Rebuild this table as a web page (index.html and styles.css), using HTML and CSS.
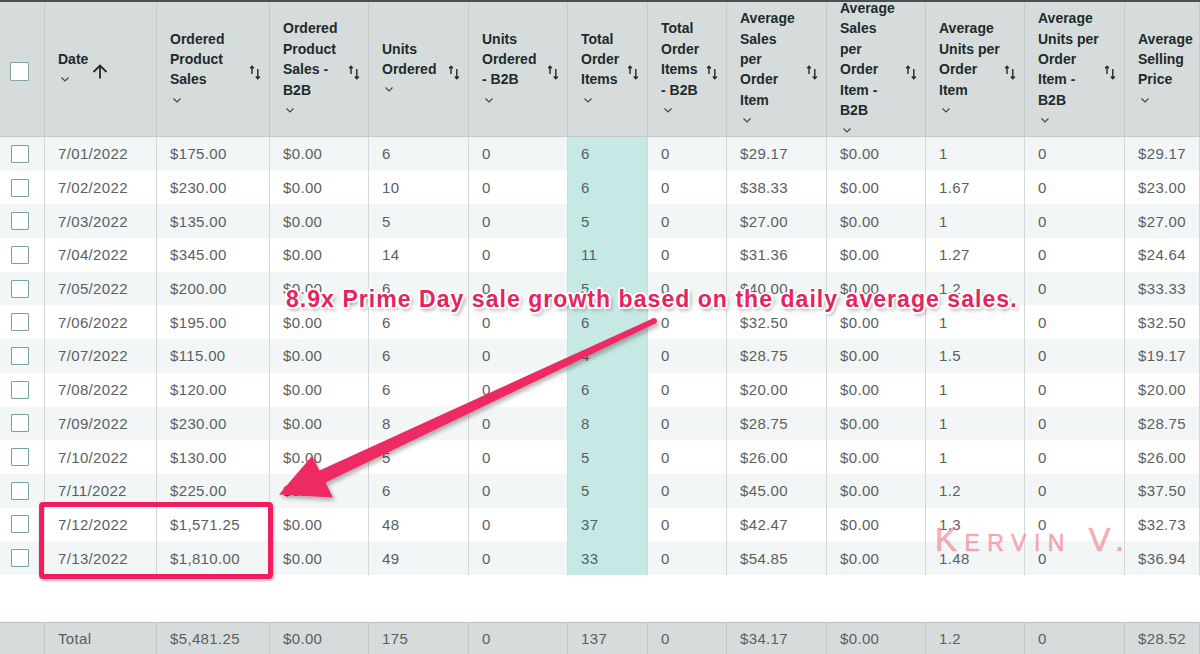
FILE: index.html
```html
<!DOCTYPE html>
<html>
<head>
<meta charset="utf-8">
<link rel="stylesheet" href="styles.css">
</head>
<body>
<div class="page">
  <div class="row head">
    <div class="hcell hcheck"><span class="cb"></span></div>
    <div class="hcell hdate">
      <div class="htext">Date<span class="chevline"><svg class="chev" width="8" height="5" viewBox="0 0 8 5"><polyline points="0.5,0.5 4,4 7.5,0.5" fill="none" stroke="#3a4747" stroke-width="1.1"/></svg></span></div>
      <svg class="uparrow" width="16" height="15" viewBox="0 0 16 15"><path d="M8 14.5V1.5M1.5 8L8 1.5L14.5 8" fill="none" stroke="#1d2b2b" stroke-width="1.8"/></svg>
    </div>
    <div class="hcell"><div class="htext">Ordered<br>Product<br>Sales<span class="chevline"><svg class="chev" width="8" height="5" viewBox="0 0 8 5"><polyline points="0.5,0.5 4,4 7.5,0.5" fill="none" stroke="#3a4747" stroke-width="1.1"/></svg></span></div><svg class="sort" width="12" height="15" viewBox="0 0 12 15"><path d="M3 9V1.5M1.2 3.3L3 1.3L4.8 3.3M8.8 4V13.5M6.8 11.5L8.8 13.7L10.8 11.5" fill="none" stroke="#1d2b2b" stroke-width="1.4"/></svg></div>
    <div class="hcell"><div class="htext">Ordered<br>Product<br>Sales -<br>B2B<span class="chevline"><svg class="chev" width="8" height="5" viewBox="0 0 8 5"><polyline points="0.5,0.5 4,4 7.5,0.5" fill="none" stroke="#3a4747" stroke-width="1.1"/></svg></span></div><svg class="sort" width="12" height="15" viewBox="0 0 12 15"><path d="M3 9V1.5M1.2 3.3L3 1.3L4.8 3.3M8.8 4V13.5M6.8 11.5L8.8 13.7L10.8 11.5" fill="none" stroke="#1d2b2b" stroke-width="1.4"/></svg></div>
    <div class="hcell"><div class="htext">Units<br>Ordered<span class="chevline"><svg class="chev" width="8" height="5" viewBox="0 0 8 5"><polyline points="0.5,0.5 4,4 7.5,0.5" fill="none" stroke="#3a4747" stroke-width="1.1"/></svg></span></div><svg class="sort" width="12" height="15" viewBox="0 0 12 15"><path d="M3 9V1.5M1.2 3.3L3 1.3L4.8 3.3M8.8 4V13.5M6.8 11.5L8.8 13.7L10.8 11.5" fill="none" stroke="#1d2b2b" stroke-width="1.4"/></svg></div>
    <div class="hcell"><div class="htext">Units<br>Ordered<br>- B2B<span class="chevline"><svg class="chev" width="8" height="5" viewBox="0 0 8 5"><polyline points="0.5,0.5 4,4 7.5,0.5" fill="none" stroke="#3a4747" stroke-width="1.1"/></svg></span></div><svg class="sort" width="12" height="15" viewBox="0 0 12 15"><path d="M3 9V1.5M1.2 3.3L3 1.3L4.8 3.3M8.8 4V13.5M6.8 11.5L8.8 13.7L10.8 11.5" fill="none" stroke="#1d2b2b" stroke-width="1.4"/></svg></div>
    <div class="hcell"><div class="htext">Total<br>Order<br>Items<span class="chevline"><svg class="chev" width="8" height="5" viewBox="0 0 8 5"><polyline points="0.5,0.5 4,4 7.5,0.5" fill="none" stroke="#3a4747" stroke-width="1.1"/></svg></span></div><svg class="sort" width="12" height="15" viewBox="0 0 12 15"><path d="M3 9V1.5M1.2 3.3L3 1.3L4.8 3.3M8.8 4V13.5M6.8 11.5L8.8 13.7L10.8 11.5" fill="none" stroke="#1d2b2b" stroke-width="1.4"/></svg></div>
    <div class="hcell"><div class="htext">Total<br>Order<br>Items<br>- B2B<span class="chevline"><svg class="chev" width="8" height="5" viewBox="0 0 8 5"><polyline points="0.5,0.5 4,4 7.5,0.5" fill="none" stroke="#3a4747" stroke-width="1.1"/></svg></span></div><svg class="sort" width="12" height="15" viewBox="0 0 12 15"><path d="M3 9V1.5M1.2 3.3L3 1.3L4.8 3.3M8.8 4V13.5M6.8 11.5L8.8 13.7L10.8 11.5" fill="none" stroke="#1d2b2b" stroke-width="1.4"/></svg></div>
    <div class="hcell"><div class="htext">Average<br>Sales<br>per<br>Order<br>Item<span class="chevline"><svg class="chev" width="8" height="5" viewBox="0 0 8 5"><polyline points="0.5,0.5 4,4 7.5,0.5" fill="none" stroke="#3a4747" stroke-width="1.1"/></svg></span></div><svg class="sort" width="12" height="15" viewBox="0 0 12 15"><path d="M3 9V1.5M1.2 3.3L3 1.3L4.8 3.3M8.8 4V13.5M6.8 11.5L8.8 13.7L10.8 11.5" fill="none" stroke="#1d2b2b" stroke-width="1.4"/></svg></div>
    <div class="hcell"><div class="htext">Average<br>Sales<br>per<br>Order<br>Item -<br>B2B<span class="chevline"><svg class="chev" width="8" height="5" viewBox="0 0 8 5"><polyline points="0.5,0.5 4,4 7.5,0.5" fill="none" stroke="#3a4747" stroke-width="1.1"/></svg></span></div><svg class="sort" width="12" height="15" viewBox="0 0 12 15"><path d="M3 9V1.5M1.2 3.3L3 1.3L4.8 3.3M8.8 4V13.5M6.8 11.5L8.8 13.7L10.8 11.5" fill="none" stroke="#1d2b2b" stroke-width="1.4"/></svg></div>
    <div class="hcell"><div class="htext">Average<br>Units per<br>Order<br>Item<span class="chevline"><svg class="chev" width="8" height="5" viewBox="0 0 8 5"><polyline points="0.5,0.5 4,4 7.5,0.5" fill="none" stroke="#3a4747" stroke-width="1.1"/></svg></span></div><svg class="sort" width="12" height="15" viewBox="0 0 12 15"><path d="M3 9V1.5M1.2 3.3L3 1.3L4.8 3.3M8.8 4V13.5M6.8 11.5L8.8 13.7L10.8 11.5" fill="none" stroke="#1d2b2b" stroke-width="1.4"/></svg></div>
    <div class="hcell"><div class="htext">Average<br>Units per<br>Order<br>Item -<br>B2B<span class="chevline"><svg class="chev" width="8" height="5" viewBox="0 0 8 5"><polyline points="0.5,0.5 4,4 7.5,0.5" fill="none" stroke="#3a4747" stroke-width="1.1"/></svg></span></div><svg class="sort" width="12" height="15" viewBox="0 0 12 15"><path d="M3 9V1.5M1.2 3.3L3 1.3L4.8 3.3M8.8 4V13.5M6.8 11.5L8.8 13.7L10.8 11.5" fill="none" stroke="#1d2b2b" stroke-width="1.4"/></svg></div>
    <div class="hcell"><div class="htext">Average<br>Selling<br>Price<span class="chevline"><svg class="chev" width="8" height="5" viewBox="0 0 8 5"><polyline points="0.5,0.5 4,4 7.5,0.5" fill="none" stroke="#3a4747" stroke-width="1.1"/></svg></span></div></div>
  </div>

  <div class="body">
    <div class="row odd"><div class="cell"><span class="cb"></span></div><div class="cell">7/01/2022</div><div class="cell">$175.00</div><div class="cell">$0.00</div><div class="cell">6</div><div class="cell">0</div><div class="cell teal">6</div><div class="cell">0</div><div class="cell">$29.17</div><div class="cell">$0.00</div><div class="cell">1</div><div class="cell">0</div><div class="cell">$29.17</div></div>
    <div class="row"><div class="cell"><span class="cb"></span></div><div class="cell">7/02/2022</div><div class="cell">$230.00</div><div class="cell">$0.00</div><div class="cell">10</div><div class="cell">0</div><div class="cell teal">6</div><div class="cell">0</div><div class="cell">$38.33</div><div class="cell">$0.00</div><div class="cell">1.67</div><div class="cell">0</div><div class="cell">$23.00</div></div>
    <div class="row odd"><div class="cell"><span class="cb"></span></div><div class="cell">7/03/2022</div><div class="cell">$135.00</div><div class="cell">$0.00</div><div class="cell">5</div><div class="cell">0</div><div class="cell teal">5</div><div class="cell">0</div><div class="cell">$27.00</div><div class="cell">$0.00</div><div class="cell">1</div><div class="cell">0</div><div class="cell">$27.00</div></div>
    <div class="row"><div class="cell"><span class="cb"></span></div><div class="cell">7/04/2022</div><div class="cell">$345.00</div><div class="cell">$0.00</div><div class="cell">14</div><div class="cell">0</div><div class="cell teal">11</div><div class="cell">0</div><div class="cell">$31.36</div><div class="cell">$0.00</div><div class="cell">1.27</div><div class="cell">0</div><div class="cell">$24.64</div></div>
    <div class="row odd"><div class="cell"><span class="cb"></span></div><div class="cell">7/05/2022</div><div class="cell">$200.00</div><div class="cell">$0.00</div><div class="cell">6</div><div class="cell">0</div><div class="cell teal">5</div><div class="cell">0</div><div class="cell">$40.00</div><div class="cell">$0.00</div><div class="cell">1.2</div><div class="cell">0</div><div class="cell">$33.33</div></div>
    <div class="row"><div class="cell"><span class="cb"></span></div><div class="cell">7/06/2022</div><div class="cell">$195.00</div><div class="cell">$0.00</div><div class="cell">6</div><div class="cell">0</div><div class="cell teal">6</div><div class="cell">0</div><div class="cell">$32.50</div><div class="cell">$0.00</div><div class="cell">1</div><div class="cell">0</div><div class="cell">$32.50</div></div>
    <div class="row odd"><div class="cell"><span class="cb"></span></div><div class="cell">7/07/2022</div><div class="cell">$115.00</div><div class="cell">$0.00</div><div class="cell">6</div><div class="cell">0</div><div class="cell teal">4</div><div class="cell">0</div><div class="cell">$28.75</div><div class="cell">$0.00</div><div class="cell">1.5</div><div class="cell">0</div><div class="cell">$19.17</div></div>
    <div class="row"><div class="cell"><span class="cb"></span></div><div class="cell">7/08/2022</div><div class="cell">$120.00</div><div class="cell">$0.00</div><div class="cell">6</div><div class="cell">0</div><div class="cell teal">6</div><div class="cell">0</div><div class="cell">$20.00</div><div class="cell">$0.00</div><div class="cell">1</div><div class="cell">0</div><div class="cell">$20.00</div></div>
    <div class="row odd"><div class="cell"><span class="cb"></span></div><div class="cell">7/09/2022</div><div class="cell">$230.00</div><div class="cell">$0.00</div><div class="cell">8</div><div class="cell">0</div><div class="cell teal">8</div><div class="cell">0</div><div class="cell">$28.75</div><div class="cell">$0.00</div><div class="cell">1</div><div class="cell">0</div><div class="cell">$28.75</div></div>
    <div class="row"><div class="cell"><span class="cb"></span></div><div class="cell">7/10/2022</div><div class="cell">$130.00</div><div class="cell">$0.00</div><div class="cell">5</div><div class="cell">0</div><div class="cell teal">5</div><div class="cell">0</div><div class="cell">$26.00</div><div class="cell">$0.00</div><div class="cell">1</div><div class="cell">0</div><div class="cell">$26.00</div></div>
    <div class="row odd"><div class="cell"><span class="cb"></span></div><div class="cell">7/11/2022</div><div class="cell">$225.00</div><div class="cell">$0.00</div><div class="cell">6</div><div class="cell">0</div><div class="cell teal">5</div><div class="cell">0</div><div class="cell">$45.00</div><div class="cell">$0.00</div><div class="cell">1.2</div><div class="cell">0</div><div class="cell">$37.50</div></div>
    <div class="row"><div class="cell"><span class="cb"></span></div><div class="cell">7/12/2022</div><div class="cell">$1,571.25</div><div class="cell">$0.00</div><div class="cell">48</div><div class="cell">0</div><div class="cell teal">37</div><div class="cell">0</div><div class="cell">$42.47</div><div class="cell">$0.00</div><div class="cell">1.3</div><div class="cell">0</div><div class="cell">$32.73</div></div>
    <div class="row odd"><div class="cell"><span class="cb"></span></div><div class="cell">7/13/2022</div><div class="cell">$1,810.00</div><div class="cell">$0.00</div><div class="cell">49</div><div class="cell">0</div><div class="cell teal">33</div><div class="cell">0</div><div class="cell">$54.85</div><div class="cell">$0.00</div><div class="cell">1.48</div><div class="cell">0</div><div class="cell">$36.94</div></div>
  </div>

  <div class="spacer"></div>

  <div class="row total"><div class="cell"></div><div class="cell">Total</div><div class="cell">$5,481.25</div><div class="cell">$0.00</div><div class="cell">175</div><div class="cell">0</div><div class="cell">137</div><div class="cell">0</div><div class="cell">$34.17</div><div class="cell">$0.00</div><div class="cell">1.2</div><div class="cell">0</div><div class="cell">$28.52</div></div>

  <div class="note">8.9x Prime Day sale growth based on the daily average sales.</div>

  <svg class="arrow" width="1200" height="654" viewBox="0 0 1200 654">
    <defs>
      <filter id="sh" x="-10%" y="-10%" width="130%" height="130%">
        <feDropShadow dx="2" dy="3" stdDeviation="2" flood-color="#000" flood-opacity="0.3"/>
      </filter>
    </defs>
    <g filter="url(#sh)" fill="#ee2a62">
      <polygon points="655.3,323.6 325.5,482.5 333,497.5 279,494.5 312,456 319.5,470.5 652.7,318.4"/>
      <circle cx="654" cy="321" r="2.9"/>
    </g>
  </svg>

  <div class="redbox"></div>

  <div class="watermark">Kervin V.</div>
</div>
</body>
</html>
```

FILE: styles.css
```css
* { box-sizing: border-box; }
html, body { margin: 0; padding: 0; background: #fff; }
.page {
  position: relative;
  width: 1200px;
  height: 654px;
  overflow: hidden;
  font-family: "Liberation Sans", Arial, sans-serif;
}
.row {
  display: grid;
  grid-template-columns: 45px 112px 113px 99px 100px 99px 80px 79px 100px 99px 99px 100px 75px;
}
.head {
  height: 137px;
  background: #d6dcdc;
  border-top: 2px solid #4a4f4f;
  border-bottom: 1px solid #c2c8c8;
}
.hcell {
  display: flex;
  align-items: center;
  justify-content: space-between;
  padding: 0 8px 0 13px;
  border-right: 1px solid #c4caca;
  color: #1d2b2b;
  font-weight: bold;
  font-size: 14px;
  line-height: 20.4px;
  white-space: nowrap;
}
.hcheck { padding: 0 0 0 10px; justify-content: flex-start; }
.hcheck .cb { width: 19px; height: 19px; border-color: #86a6a5; }
.hdate { justify-content: flex-start; }
.hdate .uparrow { margin: 0 0 0 4px; }
.htext { display: flex; flex-direction: column; margin-top: -4px; }
.chevline { display: flex; align-items: center; height: 20.4px; padding-left: 3px; }
.sort { flex: none; margin-top: 2px; }

.body .row { height: 33.7px; background: #fff; }
.body .row.odd { background: #f2f6f6; }
.cell {
  display: flex;
  align-items: center;
  padding-left: 13px;
  border-right: 1px solid #d3d8d8;
  color: #5a6060;
  font-size: 15px;
  letter-spacing: 0.35px;
  white-space: nowrap;
}
.row .cell:first-child { padding-left: 11px; }
.cell.teal { background: #c6e9e6; }
.cb {
  display: inline-block;
  width: 18px;
  height: 18px;
  background: #fff;
  border: 1.5px solid #78a09e;
  border-radius: 1px;
}
.spacer { height: 47px; background: #fff; }
.total {
  height: 33px;
  background: #d6dcdc;
  border-top: 1px solid #b9bfbf;
}
.total .cell { border-right-color: #c2c8c8; }

.note {
  position: absolute;
  left: 286px;
  top: 286px;
  font-family: "Liberation Sans", Arial, sans-serif;
  font-weight: bold;
  font-size: 23px;
  line-height: 26px;
  letter-spacing: 1.05px;
  color: #e2255f;
  white-space: nowrap;
  text-shadow:
    -1.5px -1.5px 0 #fff, 1.5px -1.5px 0 #fff, -1.5px 1.5px 0 #fff, 1.5px 1.5px 0 #fff,
    0 -2px 0 #fff, 0 2px 0 #fff, -2px 0 0 #fff, 2px 0 0 #fff,
    2px 3px 4px rgba(0,0,0,0.45);
}
.arrow { position: absolute; left: 0; top: 0; pointer-events: none; }
.redbox {
  position: absolute;
  left: 39px;
  top: 502px;
  width: 234px;
  height: 77px;
  border: 5px solid #f01e5c;
  border-radius: 4px;
  box-shadow: 1px 2px 3px rgba(0,0,0,0.25);
}
.watermark {
  position: absolute;
  left: 935px;
  top: 522px;
  font-family: "Liberation Sans", Arial, sans-serif;
  font-size: 33px;
  line-height: 36px;
  font-variant: small-caps;
  letter-spacing: 7.5px;
  -webkit-text-stroke: 0.6px rgba(240, 110, 125, 0.5);
  color: rgba(240, 110, 125, 0.55);
  white-space: nowrap;
}
```
